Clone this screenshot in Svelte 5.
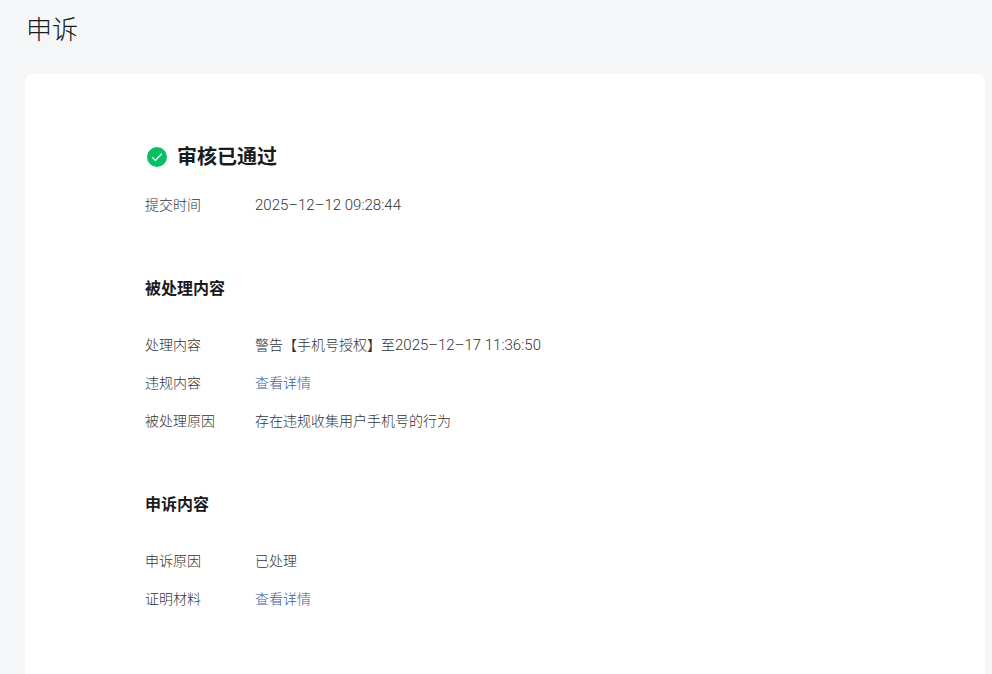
<script lang="ts">
interface Row {
	label: string;
	value?: string;
	time?: string;
	link?: boolean;
}

interface Section {
	title: string;
	rows: Row[];
}

const submitted: Row = { label: "提交时间", time: "2025–12–12 09:28:44" };

const sections: Section[] = [
	{
		title: "被处理内容",
		rows: [
			{ label: "处理内容", value: "警告【手机号授权】至", time: "2025–12–17 11:36:50" },
			{ label: "违规内容", value: "查看详情", link: true },
			{ label: "被处理原因", value: "存在违规收集用户手机号的行为" },
		],
	},
	{
		title: "申诉内容",
		rows: [
			{ label: "申诉原因", value: "已处理" },
			{ label: "证明材料", value: "查看详情", link: true },
		],
	},
];
</script>

{#snippet field(row: Row)}
	<div class="row">
		<dt>{row.label}</dt>
		<dd>
			{#if row.link}
				<a href="#detail">{row.value}</a>
			{:else}
				{row.value ?? ""}{#if row.time}<time>{row.time}</time>{/if}
			{/if}
		</dd>
	</div>
{/snippet}

<div class="page">
	<h1>申诉</h1>
	<main class="card">
		<header class="status">
			<svg class="status-icon" viewBox="0 0 20 20" aria-hidden="true">
				<circle cx="10" cy="10" r="10" fill="#07c160" />
				<path d="M5.2 10.3 8.4 13.3 14.8 6.8" fill="none" stroke="#fff" stroke-width="1.3" />
			</svg>
			<h2>审核已通过</h2>
		</header>
		<dl>
			{@render field(submitted)}
		</dl>

		{#each sections as section (section.title)}
			<section>
				<h3>{section.title}</h3>
				<dl>
					{#each section.rows as row (row.label)}
						{@render field(row)}
					{/each}
				</dl>
			</section>
		{/each}
	</main>
</div>

<style>
	:global(body) {
		margin: 0;
		background: #f5f6f8;
	}

	.page {
		display: flex;
		flex-direction: column;
		gap: 23px;
		min-height: 100vh;
		box-sizing: border-box;
		padding: 9px 7px 0 25px;
		font-family: Roboto, "Noto Sans CJK SC", sans-serif;
		font-weight: 300;
		color: #1a1b1c;
	}

	h1,
	h2,
	h3,
	dl,
	dd {
		margin: 0;
	}

	h1 {
		padding-left: 1px;
		font-size: 26px;
		font-weight: 300;
		line-height: 42px;
	}

	.card {
		flex: 1;
		padding: 69px 120px 52px;
		border-radius: 8px 8px 0 0;
		background: #fff;
	}

	.status {
		display: flex;
		align-items: center;
		gap: 10px;
		margin-bottom: 22px;
		padding-left: 2px;
	}

	.status-icon {
		width: 20px;
		height: 20px;
	}

	h2 {
		font-size: 20px;
		font-weight: 700;
		line-height: 28px;
	}

	section {
		margin-top: 60px;
	}

	h3 {
		margin-bottom: 32px;
		font-size: 16px;
		font-weight: 700;
		line-height: 24px;
	}

	dl {
		display: flex;
		flex-direction: column;
		gap: 14px;
	}

	.row {
		display: flex;
		color: #333435;
		font-size: 14px;
		line-height: 24px;
	}

	dt {
		flex: none;
		width: 110px;
	}

	time {
		font-size: 15px;
	}

	a {
		color: #3a5a98;
		text-decoration: none;
	}
</style>
